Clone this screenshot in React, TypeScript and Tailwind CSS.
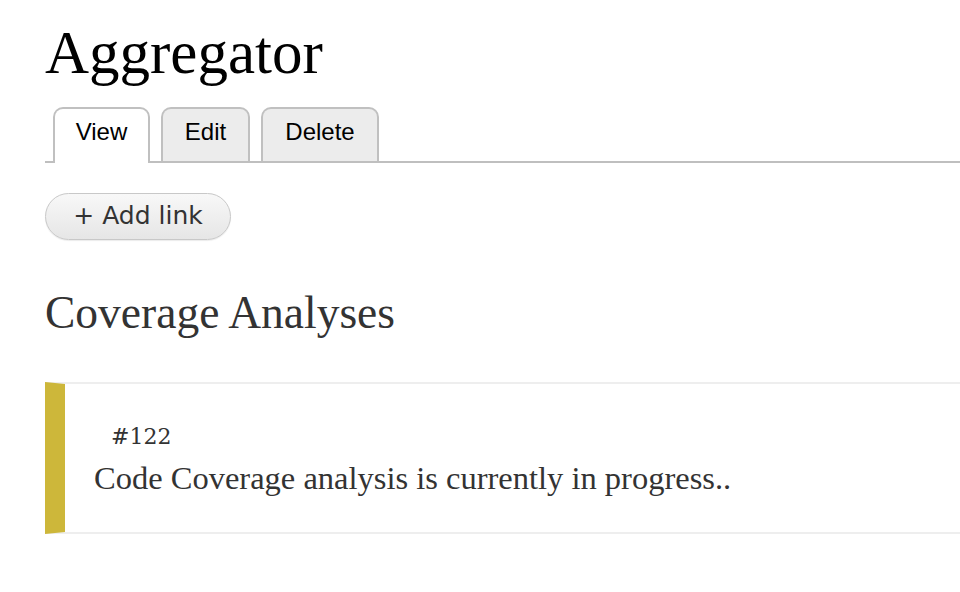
export default function App() {
  const serif = { fontFamily: '"Liberation Serif", "DejaVu Serif", serif' };
  return (
    <div className="w-[960px] h-[592px] bg-white overflow-hidden">
      <div className="pl-[45px] pt-[17px]">
        <h1
          className="text-[61px] leading-[72px] text-black font-normal"
          style={serif}
        >
          Aggregator
        </h1>
        <div className="mt-[18px] flex items-end border-b-2 border-[#bfbfbf] pl-[8px] gap-[11px] h-[56px]">
          <div className="relative -mb-[2px] h-[56px] w-[97px] pb-[8px] bg-white border-2 border-b-0 border-[#c0c0c0] rounded-t-[10px] flex items-center justify-center text-[24px] text-black font-['Liberation_Sans',Arial,sans-serif]">
            View
          </div>
          <div className="h-[54px] w-[89px] pb-[6px] bg-[#ececec] border-2 border-b-0 border-[#c0c0c0] rounded-t-[10px] flex items-center justify-center text-[24px] text-black font-['Liberation_Sans',Arial,sans-serif]">
            Edit
          </div>
          <div className="h-[54px] w-[118px] pb-[6px] bg-[#ececec] border-2 border-b-0 border-[#c0c0c0] rounded-t-[10px] flex items-center justify-center text-[24px] text-black font-['Liberation_Sans',Arial,sans-serif]">
            Delete
          </div>
        </div>
        <div className="mt-[30px]">
          <div className="inline-flex items-center justify-center pb-[1px] h-[47px] w-[186px] rounded-full border border-[#c8c8c8] bg-gradient-to-b from-[#f8f8f8] to-[#e6e6e6] text-[25px] text-[#333] font-['DejaVu_Sans',Verdana,sans-serif] shadow-[0_1px_1px_rgba(0,0,0,0.08)]">
            + Add link
          </div>
        </div>
        <h2
          className="mt-[45px] text-[45.5px] leading-[56px] text-[#333] font-normal"
          style={serif}
        >
          Coverage Analyses
        </h2>
        <div className="mt-[41px] border-l-[20px] border-l-[#cdb73a] border-y-2 border-y-[#eeeeee] h-[152px] pl-[29px] pt-[38px]">
          <div
            className="pl-[17px] text-[22px] leading-[30px] text-[#333]"
            style={{ fontFamily: '"DejaVu Serif", serif' }}
          >
            #122
          </div>
          <div className="mt-[7px] text-[32.5px] leading-[38px] text-[#333]" style={serif}>
            Code Coverage analysis is currently in progress..
          </div>
        </div>
      </div>
    </div>
  );
}
